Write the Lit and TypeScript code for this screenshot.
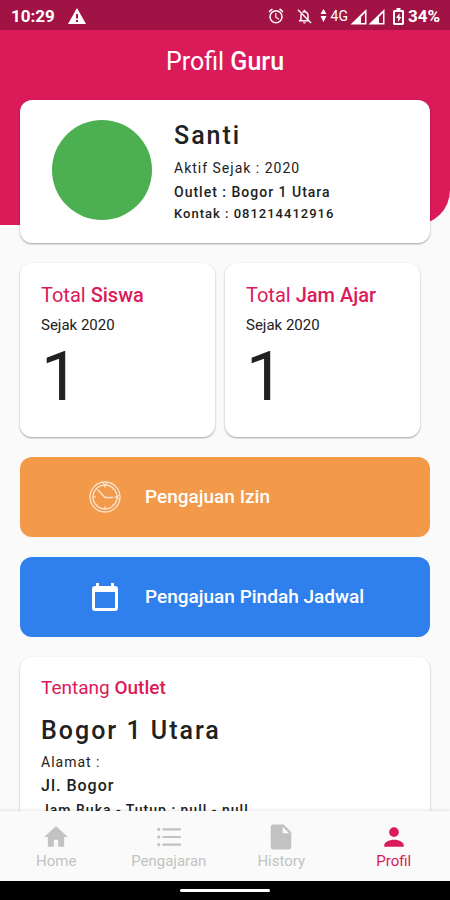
import { LitElement, html, css, svg, nothing } from "lit";
import { customElement, property } from "lit/decorators.js";

const navItems = [
  { label: "Home", active: false, icon: svg`<path d="M10 21v-6.500h4V21h5.500v-9H23L12 2 1 12h3.500v9z"/>` },
  {
    label: "Pengajaran",
    active: false,
    icon: svg`<circle cx="2.500" cy="5" r="1.500"/><circle cx="2.500" cy="12" r="1.500"/><circle cx="2.500" cy="19" r="1.500"/><path d="M6 4h17v2H6zM6 11h17v2H6zM6 18h17v2H6z"/>`,
  },
  {
    label: "History",
    active: false,
    icon: svg`<path fill-rule="evenodd" d="M5 .5h9.500L21.500 7.500v13.500a2.500 2.500 0 0 1-2.500 2.500H5A2.500 2.500 0 0 1 2.500 21V3A2.500 2.500 0 0 1 5 .5zM13.500 2.500V8.500H19.500z"/>`,
  },
  {
    label: "Profil",
    active: true,
    icon: svg`<path d="M12 12a4.500 4.500 0 1 0 0-9 4.500 4.500 0 0 0 0 9zM3 21v-1.500c0-3.300 6-5 9-5s9 1.700 9 5V21z"/>`,
  },
];

@customElement("status-bar")
class StatusBar extends LitElement {
  static styles = css`
    :host {
      display: flex;
      align-items: center;
      height: 30px;
      flex: none;
      padding: 2px 10px 0 11px;
      box-sizing: border-box;
      background: #a21345;
      color: #fff;
      font: 700 17px/28px Roboto, sans-serif;
    }
    svg { display: block; fill: currentColor; flex: none; }
    .warn { margin-left: 13px; }
    .right { display: flex; align-items: center; margin-left: auto; }
    .alarm { margin-right: 11px; }
    .bell { margin-right: 7px; }
    .arrows { margin-right: 4px; }
    .net { font-size: 14px; font-weight: 400; margin-right: 2px; }
    .signal { margin-right: 1px; }
    .battery { margin: 0 4px 0 7px; }
  `;

  private signal() {
    return html`<svg class="signal" width="17" height="17" viewBox="0 0 17 17" aria-hidden="true">
      <path fill-rule="evenodd" d="M16.500 1v15.500H.5zM15 5l-4 4v6h4z" />
    </svg>`;
  }

  render() {
    return html`
      <span>10:29</span>
      <svg class="warn" width="18" height="16" viewBox="0 0 18 16" aria-hidden="true">
        <path fill-rule="evenodd" d="M9 0l9 16H0zM8 6v4.500h2V6zM8 12v2h2v-2z" />
      </svg>
      <div class="right">
        <svg class="alarm" width="18" height="18" viewBox="0 0 24 24" aria-hidden="true">
          <path d="M22 5.700l-4.600-3.900-1.300 1.500 4.600 3.900zM7.900 3.400L6.600 1.900 2 5.700l1.300 1.500zM12.500 8H11v6l4.700 2.900.8-1.300-4-2.300zM12 4a9 9 0 1 0 0 18 9 9 0 0 0 0-18zm0 16a7 7 0 1 1 0-14 7 7 0 0 1 0 14z" />
        </svg>
        <svg class="bell" width="17" height="17" viewBox="0 0 24 24" aria-hidden="true">
          <path d="M12 22a2 2 0 0 0 2-2h-4c0 1.100.9 2 2 2zM4 19v-1l2-2v-5c0-1.500.4-2.900 1.100-4L8.600 8.500C8.200 9.200 8 10 8 11v6h8.800l2 2zM16 14.500V11c0-2.500-1.500-4.500-4-4.500-.8 0-1.500.2-2.100.5L8.400 5.500c.6-.4 1.300-.7 2.100-.8V4a1.500 1.500 0 0 1 3 0v.7C16.400 5.400 18 7.900 18 11v5.500zM2 3.300L3.400 1.900 22 20.600 20.600 22z" />
        </svg>
        <svg class="arrows" width="7" height="14" viewBox="0 0 7 14" aria-hidden="true">
          <path d="M3.500 0L6.500 5H.5zM3.500 13L.5 7h6z" />
        </svg>
        <span class="net">4G</span>
        ${this.signal()}${this.signal()}
        <svg class="battery" width="11" height="17" viewBox="0 0 11 17" aria-hidden="true">
          <path fill-rule="evenodd" d="M3.500 0h4v2H10l1 1v13l-1 1H1l-1-1V3l1-1h2.500zM2 4v11h7V4zM6.500 5L3 10h2v4l3.500-5h-2z" />
        </svg>
        <span>34%</span>
      </div>
    `;
  }
}

@customElement("stat-card")
class StatCard extends LitElement {
  @property() subject = "";
  @property() since = "";
  @property() value = "";

  static styles = css`
    :host {
      display: block;
      box-sizing: border-box;
      padding: 20px 20px 26px 21px;
      border-radius: 12px;
      background: #fff;
      box-shadow: 0 1px 2px rgba(0, 0, 0, 0.36);
      color: #212121;
    }
    h2 { margin: 0; font-size: 20px; line-height: 24px; font-weight: 400; color: #db1a5a; }
    b { font-weight: 500; }
    .since { margin: 8px 0 0; font-size: 15px; line-height: 20px; }
    .value { margin: 8px 0 0; font-size: 68px; line-height: 68px; }
  `;

  render() {
    return html`
      <h2>Total <b>${this.subject}</b></h2>
      <p class="since">${this.since}</p>
      <p class="value">${this.value}</p>
    `;
  }
}

@customElement("bottom-nav")
class BottomNav extends LitElement {
  static styles = css`
    :host {
      display: block;
      flex: none;
      background: #fafafa;
      box-shadow: 0 -1px 3px rgba(0, 0, 0, 0.1);
      position: relative;
    }
    nav { display: grid; grid-template-columns: repeat(4, 1fr); height: 70px; }
    a {
      display: flex;
      flex-direction: column;
      align-items: center;
      padding-top: 13px;
      gap: 1px;
      font-size: 15px;
      line-height: 20px;
      color: #c2c2c2;
      text-decoration: none;
    }
    a.active { color: #db1a5a; }
    svg { display: block; fill: currentColor; }
    .system { display: flex; justify-content: center; align-items: center; height: 19px; background: #000; }
    .handle { width: 20%; height: 3px; border-radius: 2px; background: #fff; }
  `;

  render() {
    return html`
      <nav>
        ${navItems.map(
          (item) => html`<a href="#${item.label.toLowerCase()}" class=${item.active ? "active" : nothing}>
            <svg width="26" height="26" viewBox="0 0 24 24" aria-hidden="true">${item.icon}</svg>
            <span>${item.label}</span>
          </a>`
        )}
      </nav>
      <div class="system"><div class="handle"></div></div>
    `;
  }
}

@customElement("app-root")
class AppRoot extends LitElement {
  static styles = css`
    :host {
      display: flex;
      flex-direction: column;
      height: 100vh;
      background: #fafafa;
      color: #212121;
      font-family: Roboto, sans-serif;
    }
    h1, h2, h3, p { margin: 0; font-weight: 400; }
    b { font-weight: 500; }
    main { flex: 1; min-height: 0; overflow-y: auto; scrollbar-width: none; }
    .hero {
      display: flow-root;
      padding: 16px 20px 0;
      border-bottom-right-radius: 35px;
      background: #db1a5a;
      margin-bottom: 38px;
    }
    h1 { font-size: 25px; line-height: 32px; text-align: center; color: #fff; }
    .card {
      border-radius: 12px;
      background: #fff;
      box-shadow: 0 1px 2px rgba(0, 0, 0, 0.36);
    }
    .profile {
      display: flex;
      align-items: flex-start;
      gap: 22px;
      margin: 22px 0 -18px;
      padding: 20px 32px 19px;
    }
    .avatar { width: 100px; height: 100px; border-radius: 50%; background: #4caf50; flex: none; }
    .name { font-size: 25px; line-height: 32px; font-weight: 500; letter-spacing: 2px; }
    .text { font-size: 14px; line-height: 24px; letter-spacing: 1px; }
    .strong { font-weight: 500; }
    .small { font-size: 13px; line-height: 20px; font-weight: 500; letter-spacing: 1px; }
    .profile .name { margin-bottom: 4px; }
    .content { display: flex; flex-direction: column; gap: 20px; padding: 0 20px 20px; }
    .stats { display: grid; grid-template-columns: 1fr 1fr; gap: 10px; padding-right: 10px; }
    button {
      display: flex;
      align-items: center;
      height: 80px;
      padding: 0 20px 0 68px;
      gap: 23px;
      border: 0;
      border-radius: 12px;
      color: #fff;
      font: 500 19px/24px Roboto, sans-serif;
      text-align: left;
    }
    button svg { display: block; flex: none; }
    .leave { background: #f2994a; }
    .move { background: #2f80ed; }
    .outlet { padding: 19px 20px 20px 21px; }
    .outlet h2 { font-size: 19px; line-height: 24px; color: #db1a5a; }
    .outlet .name { margin: 15px 0 3px; }
    .outlet .address { font-size: 16px; line-height: 24px; font-weight: 500; letter-spacing: 1px; }
  `;

  render() {
    return html`
      <status-bar></status-bar>
      <main>
        <header class="hero">
          <h1>Profil <b>Guru</b></h1>
          <section class="card profile">
            <div class="avatar"></div>
            <div>
              <h2 class="name">Santi</h2>
              <p class="text">Aktif Sejak : 2020</p>
              <p class="text strong">Outlet : Bogor 1 Utara</p>
              <p class="small">Kontak : 081214412916</p>
            </div>
          </section>
        </header>
        <div class="content">
          <div class="stats">
            <stat-card subject="Siswa" since="Sejak 2020" value="1"></stat-card>
            <stat-card subject="Jam Ajar" since="Sejak 2020" value="1"></stat-card>
          </div>
          <button class="leave" type="button">
            <svg width="34" height="34" viewBox="0 0 34 34" fill="none" stroke="#fff" stroke-opacity=".75" aria-hidden="true">
              <circle cx="17" cy="17" r="15" stroke-width="1.300" />
              <circle cx="17" cy="17" r="12" stroke-width="1.300" />
              <path d="M10 10l7 7.500h8" stroke-width="1.500" />
              <path d="M17 5v3M17 26v3M5 17h3M26 17h3M15 3l2 2 2-2M31 15l-2 2 2 2M8.500 8.500l1 1M25.500 8.500l-1 1M8.500 25.500l1-1M25.500 25.500l-1-1" />
            </svg>
            Pengajuan Izin
          </button>
          <button class="move" type="button">
            <svg width="34" height="34" viewBox="0 0 34 34" fill="#fff" aria-hidden="true">
              <path fill-rule="evenodd" d="M8 3h3v3h12V3h3v3h1a3 3 0 0 1 3 3v19a3 3 0 0 1-3 3H7a3 3 0 0 1-3-3V9a3 3 0 0 1 3-3h1zM7 12v16h20V12z" />
            </svg>
            Pengajuan Pindah Jadwal
          </button>
          <section class="card outlet">
            <h2>Tentang <b>Outlet</b></h2>
            <h3 class="name">Bogor 1 Utara</h3>
            <p class="text">Alamat :</p>
            <p class="address">Jl. Bogor</p>
            <p class="text strong">Jam Buka - Tutup : null - null</p>
          </section>
        </div>
      </main>
      <bottom-nav></bottom-nav>
    `;
  }
}
